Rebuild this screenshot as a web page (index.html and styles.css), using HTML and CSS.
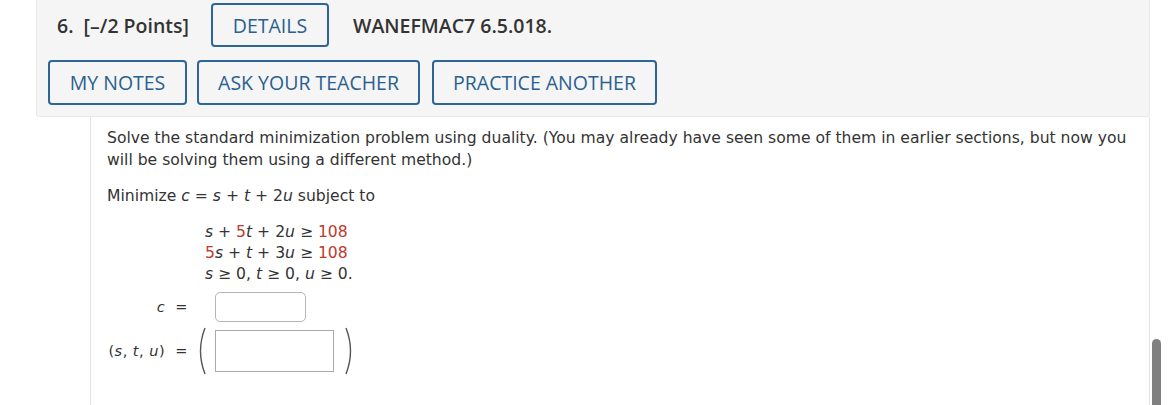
FILE: index.html
```html
<!DOCTYPE html>
<html>
<head>
<meta charset="utf-8">
<link rel="stylesheet" href="styles.css">
</head>
<body>
<div class="question">
  <div class="header">
    <div class="row1">
      <span class="qnum">6.&nbsp; [–/2 Points]</span>
      <span class="btn btn-details">DETAILS</span>
      <span class="qcode">WANEFMAC7 6.5.018.</span>
    </div>
    <div class="row2">
      <span class="btn btn-notes">MY NOTES</span>
      <span class="btn btn-ask">ASK YOUR TEACHER</span>
      <span class="btn btn-practice">PRACTICE ANOTHER</span>
    </div>
  </div>
  <div class="content">
    <p class="para">Solve the standard minimization problem using duality. (You may already have seen some of them in earlier sections, but now you will be solving them using a different method.)</p>
    <p class="para para2">Minimize <i>c</i> = <i>s</i> + <i>t</i> + 2<i>u</i> subject to</p>
    <div class="constraints">
      <div><i>s</i> + <span class="red">5</span><i>t</i> + 2<i>u</i> ≥ <span class="red">108</span></div>
      <div><span class="red">5</span><i>s</i> + <i>t</i> + 3<i>u</i> ≥ <span class="red">108</span></div>
      <div><i>s</i> ≥ 0, <i>t</i> ≥ 0, <i>u</i> ≥ 0.</div>
    </div>
    <div class="answers">
      <div class="label lab-c"><i>c</i>&nbsp; =</div>
      <div class="field"><span class="input input-c"></span></div>
      <div class="label lab-stu">(<i>s</i>, <i>t</i>, <i>u</i>)&nbsp; =</div>
      <div class="field field-stu">
        <svg class="paren" width="12" height="48" viewBox="0 0 12 48"><path d="M10 1 Q1 24 10 47" fill="none" stroke="#555" stroke-width="1.4"/></svg>
        <span class="input input-stu"></span>
        <svg class="paren" width="12" height="48" viewBox="0 0 12 48"><path d="M2 1 Q11 24 2 47" fill="none" stroke="#555" stroke-width="1.4"/></svg>
      </div>
    </div>
  </div>
</div>
<div class="scroll-thumb"></div>
</body>
</html>
```

FILE: styles.css
```css
html, body {
  margin: 0;
  padding: 0;
  background: #fff;
}
body {
  width: 1170px;
  height: 405px;
  overflow: hidden;
  position: relative;
  font-family: "DejaVu Sans", Verdana, sans-serif;
  color: #333;
}
.question {
  margin-left: 36px;
  width: 1114px;
}
.header {
  background: #f5f5f5;
  border: 1px solid #e8e8e8;
  border-top: none;
  border-radius: 0 0 3px 3px;
  padding: 3px 0 11px 11px;
  font-family: "Open Sans", sans-serif;
}
.row1 {
  display: flex;
  align-items: center;
  margin-left: 9px;
  height: 44px;
}
.qnum, .qcode {
  font-weight: 600;
  font-size: 19.5px;
  color: #333;
}
.btn {
  display: inline-flex;
  align-items: center;
  justify-content: center;
  box-sizing: border-box;
  height: 45px;
  border: 2px solid #2e6597;
  border-radius: 4px;
  color: #2a5f90;
  font-size: 19.5px;
  font-weight: 400;
}
.btn-details {
  width: 118px;
  height: 44px;
  margin-left: 22px;
}
.qcode {
  margin-left: 24px;
}
.row2 {
  display: flex;
  margin-top: 13px;
}
.btn-notes { width: 139px; }
.btn-ask { width: 223px; margin-left: 10px; }
.btn-practice { width: 225px; margin-left: 12px; }

.content {
  margin-left: 54px;
  border-left: 1px solid #e3e3e3;
  border-right: 1px solid #e3e3e3;
  padding: 10px 0 40px 16px;
  font-size: 15.6px;
  line-height: 22px;
}
.para {
  margin: 0;
  width: 1035px;
}
.para2 {
  margin-top: 14px;
}
.constraints {
  margin: 15px 0 0 98px;
  line-height: 21px;
}
.red {
  color: #c0392b;
}
.answers {
  display: grid;
  grid-template-columns: 81px auto;
  column-gap: 7px;
  row-gap: 5px;
  margin-top: 7px;
  align-items: center;
  font-size: 14.5px;
}
.label {
  text-align: right;
  white-space: nowrap;
  letter-spacing: 0.5px;
}
.field {
  display: flex;
  align-items: center;
  padding-left: 20px;
}
.input {
  display: block;
  box-sizing: border-box;
  background: #fff;
}
.input-c {
  width: 91px;
  height: 30px;
  border: 1px solid #b5b5b5;
  border-radius: 5px;
}
.field-stu {
  padding-left: 0;
}
.paren {
  display: block;
}
.field-stu .paren:first-child {
  margin-right: 8px;
}
.field-stu .paren:last-child {
  margin-left: 10px;
}
.input-stu {
  width: 119px;
  height: 42px;
  border: 1px solid #aaa;
}
.scroll-thumb {
  position: absolute;
  left: 1152px;
  top: 339px;
  width: 9px;
  height: 80px;
  background: #808080;
  border-radius: 5px 5px 0 0;
}
```
